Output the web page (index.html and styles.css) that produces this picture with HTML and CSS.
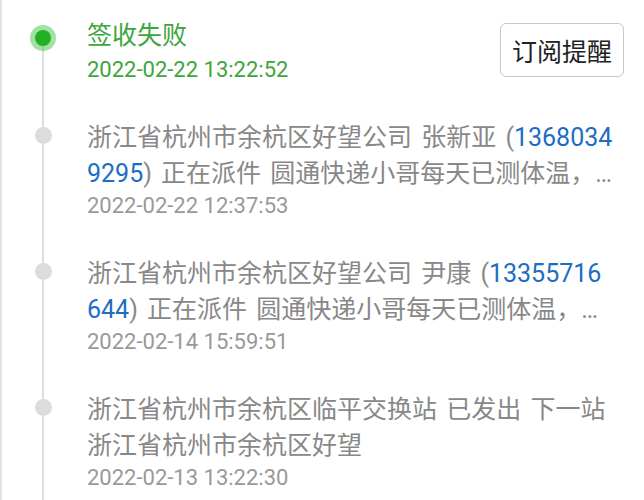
FILE: index.html
```html
<!DOCTYPE html>
<html lang="zh-CN">
<head>
    <meta charset="UTF-8">
    <title>物流详情</title>
    <link rel="stylesheet" href="styles.css">
</head>
<body>
    <div class="timeline">
        <div class="item first">
            <div class="rail"><span class="dot active"></span></div>
            <div class="content head">
                <div class="info">
                    <p class="title">签收失败</p>
                    <p class="time">2022-02-22 13:22:52</p>
                </div>
                <button class="sub-btn">订阅提醒</button>
            </div>
        </div>
        <div class="item">
            <div class="rail"><span class="dot"></span></div>
            <div class="content">
                <p class="desc">浙江省杭州市余杭区好望公司 张新亚 (<a class="tel">1368034<br>9295</a>) 正在派件 圆通快递小哥每天已测体温，…</p>
                <p class="time">2022-02-22 12:37:53</p>
            </div>
        </div>
        <div class="item">
            <div class="rail"><span class="dot"></span></div>
            <div class="content">
                <p class="desc">浙江省杭州市余杭区好望公司 尹康 (<a class="tel">13355716<br>644</a>) 正在派件 圆通快递小哥每天已测体温，…</p>
                <p class="time">2022-02-14 15:59:51</p>
            </div>
        </div>
        <div class="item">
            <div class="rail"><span class="dot"></span></div>
            <div class="content">
                <p class="desc">浙江省杭州市余杭区临平交换站 已发出 下一站<br>浙江省杭州市余杭区好望</p>
                <p class="time">2022-02-13 13:22:30</p>
            </div>
        </div>
    </div>
</body>
</html>
```

FILE: styles.css
```css
*{
    margin: 0;
    padding: 0;
}
html,body{
    height: 100%;
    background: #fff;
}
body{
    font-family: Roboto, "Noto Sans CJK SC", sans-serif;
    overflow: hidden;
}
.timeline{
    min-height: 100%;
    border-left: 2px solid #e4e4e4;
    padding: 18px 20px 0 0;
    box-sizing: border-box;
}
.item{
    display: flex;
}
.rail{
    width: 85px;
    flex: none;
    background: linear-gradient(#dedede,#dedede) no-repeat 40px 0 / 2px 100%;
}
.first .rail{
    background-position: 40px 20px;
}
.dot{
    display: block;
    width: 17px;
    height: 17px;
    border-radius: 50%;
    background: #dcdcdc;
    margin: 7px 0 0 33px;
}
.dot.active{
    width: 16px;
    height: 16px;
    background: #24b024;
    margin: 12px 0 0 33px;
    box-shadow: 0 0 0 5px rgba(70,195,70,.5);
}
.content{
    flex: 1;
    min-width: 0;
    padding-bottom: 36px;
}
.head{
    display: flex;
    justify-content: space-between;
    align-items: flex-start;
}
.title{
    font-size: 25px;
    line-height: 36px;
    color: #3ca63c;
}
.head .time{
    color: #3ca63c;
    margin-top: 2px;
}
.time{
    font-size: 22px;
    line-height: 28px;
    color: #999;
}
.desc{
    font-size: 25px;
    line-height: 36px;
    color: #888;
    word-spacing: 3px;
    white-space: nowrap;
}
.tel{
    color: #1c6dc3;
}
.sub-btn{
    margin-top: 5px;
    height: 54px;
    padding: 0 11px;
    font-family: inherit;
    font-size: 25px;
    color: #222;
    background: #fff;
    border: 1px solid #c8c8c8;
    border-radius: 6px;
}
```
